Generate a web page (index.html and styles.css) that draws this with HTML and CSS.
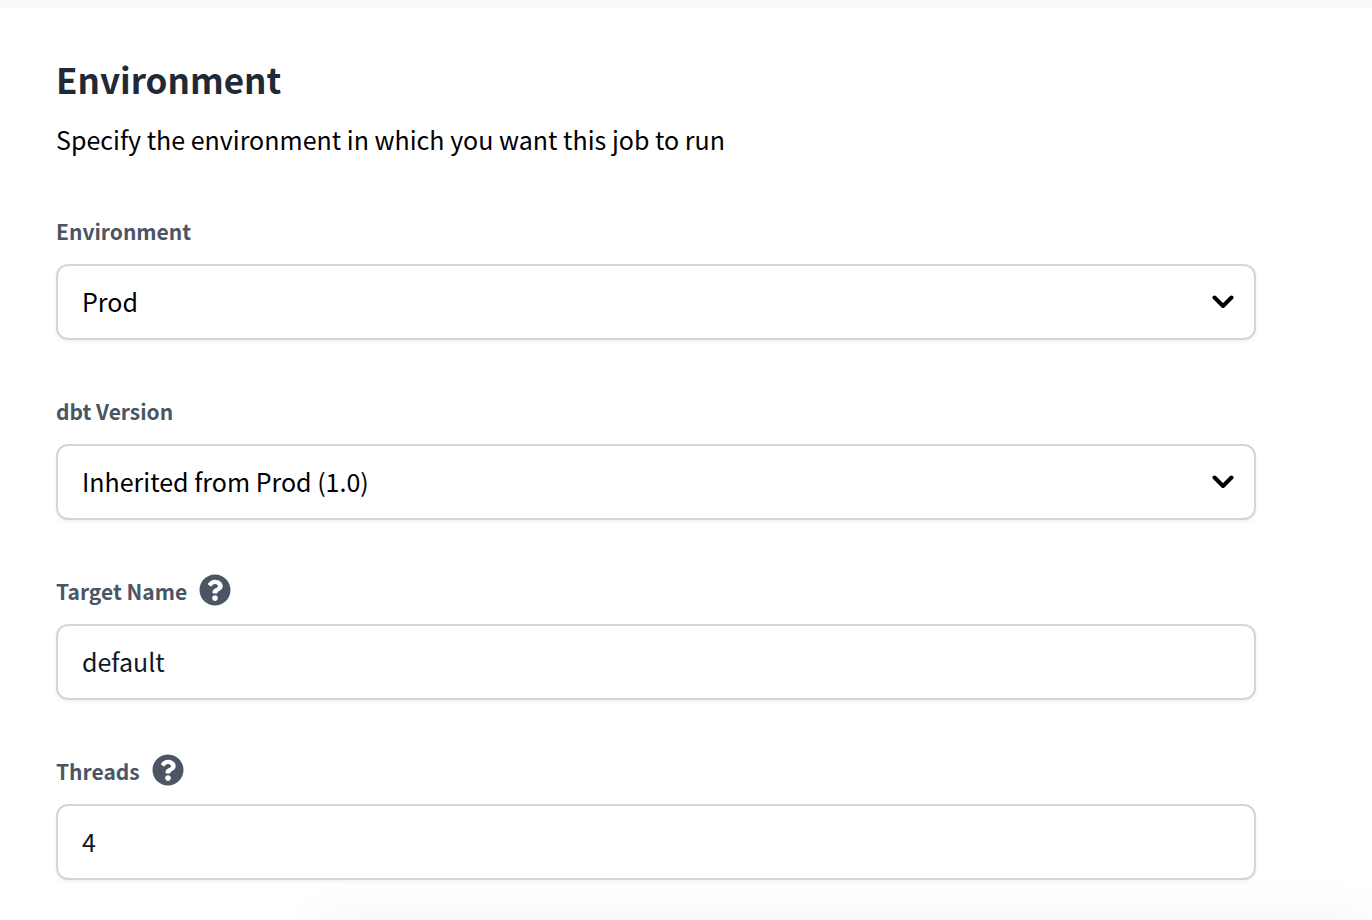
FILE: index.html
```html
<!DOCTYPE html>
<html lang="en">
<head>
<meta charset="utf-8">
<title>Environment</title>
<link rel="stylesheet" href="styles.css">
</head>
<body>
<main class="panel">
  <h1 class="title">Environment</h1>
  <p class="intro">Specify the environment in which you want this job to run</p>
  <form class="fields">
    <div class="field">
      <div class="label-row"><label for="environment">Environment</label></div>
      <div class="select-wrap">
        <select class="control" id="environment"><option>Prod</option></select>
        <svg class="chevron" viewBox="0 0 22 14" aria-hidden="true"><path d="M2.500 2.500 11 11l8.500-8.500"/></svg>
      </div>
    </div>
    <div class="field">
      <div class="label-row"><label for="version">dbt Version</label></div>
      <div class="select-wrap">
        <select class="control" id="version"><option>Inherited from Prod (1.0)</option></select>
        <svg class="chevron" viewBox="0 0 22 14" aria-hidden="true"><path d="M2.500 2.500 11 11l8.500-8.500"/></svg>
      </div>
    </div>
    <div class="field">
      <div class="label-row"><label for="target">Target Name</label>
        <svg class="help" viewBox="0 0 512 512" role="img" aria-label="Help"><path d="M504 256c0 136.997-111.043 248-248 248S8 392.997 8 256C8 119.083 119.043 8 256 8s248 111.083 248 248zM262.655 90c-54.497 0-89.255 22.957-116.549 63.758-3.536 5.286-2.353 12.415 2.715 16.258l34.699 26.310c5.205 3.947 12.621 3.008 16.665-2.122 17.864-22.658 30.113-35.797 57.303-35.797 20.429 0 45.698 13.148 45.698 32.958 0 14.976-12.363 22.667-32.534 33.976C247.128 238.528 216 254.941 216 296v4c0 6.627 5.373 12 12 12h56c6.627 0 12-5.373 12-12v-1.333c0-28.462 83.186-29.647 83.186-106.667 0-58.002-60.165-102-116.531-102zM256 338c-25.365 0-46 20.635-46 46 0 25.364 20.635 46 46 46s46-20.636 46-46c0-25.364-20.635-46-46-46z"/></svg>
      </div>
      <input class="control" id="target" type="text" value="default">
    </div>
    <div class="field">
      <div class="label-row"><label for="threads">Threads</label>
        <svg class="help" viewBox="0 0 512 512" role="img" aria-label="Help"><path d="M504 256c0 136.997-111.043 248-248 248S8 392.997 8 256C8 119.083 119.043 8 256 8s248 111.083 248 248zM262.655 90c-54.497 0-89.255 22.957-116.549 63.758-3.536 5.286-2.353 12.415 2.715 16.258l34.699 26.310c5.205 3.947 12.621 3.008 16.665-2.122 17.864-22.658 30.113-35.797 57.303-35.797 20.429 0 45.698 13.148 45.698 32.958 0 14.976-12.363 22.667-32.534 33.976C247.128 238.528 216 254.941 216 296v4c0 6.627 5.373 12 12 12h56c6.627 0 12-5.373 12-12v-1.333c0-28.462 83.186-29.647 83.186-106.667 0-58.002-60.165-102-116.531-102zM256 338c-25.365 0-46 20.635-46 46 0 25.364 20.635 46 46 46s46-20.636 46-46c0-25.364-20.635-46-46-46z"/></svg>
      </div>
      <input class="control" id="threads" type="text" value="4">
    </div>
  </form>
</main>
<div class="bottom-shade" aria-hidden="true"></div>
</body>
</html>
```
FILE: styles.css
```css
* { box-sizing: border-box; }
body {
  margin: 0;
  background: #fff;
  color: #000;
  font-family: "Noto Sans CJK SC", "Noto Sans", sans-serif;
}
.panel {
  padding: 47px 116px 40px 56px;
  border-top: 8px solid #f9fafb;
  box-shadow: inset 0 1px 0 #fdfdfd;
}
.title {
  margin: 0;
  color: #1f2937;
  font-size: 35px;
  font-weight: 700;
  line-height: 48px;
}
.intro {
  margin: 16px 0 0;
  font-size: 25px;
  line-height: 40px;
}
.fields {
  display: flex;
  flex-direction: column;
  gap: 50px;
  margin-top: 51px;
}
.label-row {
  display: flex;
  align-items: center;
  gap: 12px;
  height: 40px;
  margin-bottom: 14px;
  color: #4b5563;
  font-size: 21px;
  font-weight: 700;
  line-height: 32px;
}
.label-row label { padding-top: 2px; }
.select-wrap { position: relative; }
.control {
  display: block;
  width: 100%;
  height: 76px;
  padding: 0 24px 2px;
  border: 2px solid #d1d5db;
  border-radius: 12px;
  background: #fff;
  box-shadow: 0 2px 4px rgba(0, 0, 0, .05);
  color: #000;
  font-family: inherit;
  font-size: 25px;
  appearance: none;
}
input.control { color: #111827; }
.chevron {
  position: absolute;
  top: 31px;
  right: 22px;
  width: 22px;
  height: 14px;
  fill: none;
  stroke: #000;
  stroke-width: 4;
  stroke-linecap: round;
  stroke-linejoin: round;
  pointer-events: none;
}
.help {
  width: 32px;
  height: 32px;
  fill: #4b5563;
}
.bottom-shade {
  position: fixed;
  right: 0;
  bottom: -80px;
  left: 320px;
  height: 80px;
  box-shadow: 0 0 56px rgba(0, 0, 0, .05);
  pointer-events: none;
}
```
